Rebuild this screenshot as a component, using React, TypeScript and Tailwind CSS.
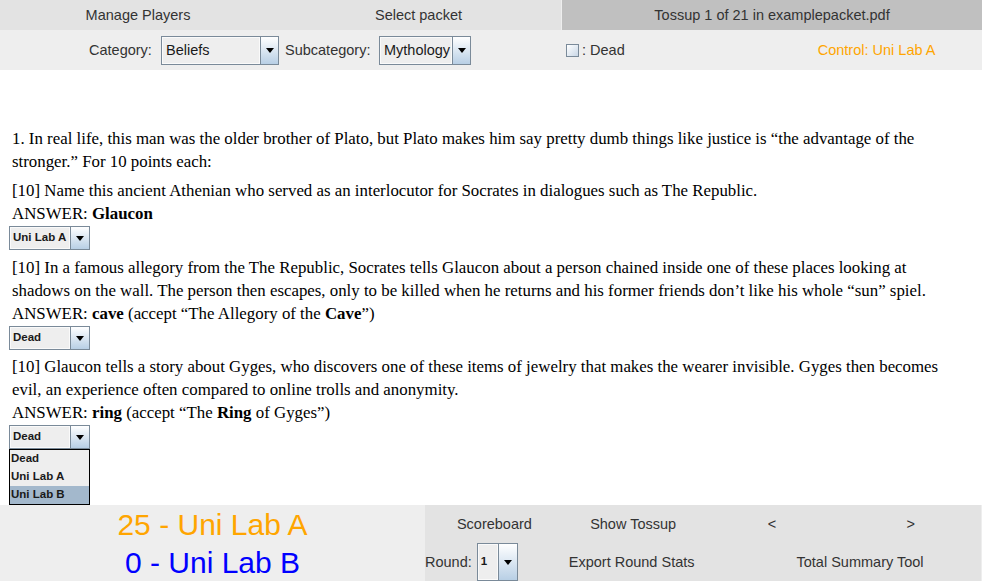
import React from 'react'

function Arrow({ w }: { w: string }) {
  return (
    <div className={`${w} h-full flex items-center justify-center border-l border-[#7a8a99] bg-gradient-to-b from-[#ffffff] to-[#b8cfe5]`}>
      <div className="w-0 h-0 border-l-[4px] border-r-[4px] border-t-[5px] border-l-transparent border-r-transparent border-t-black" />
    </div>
  )
}

function Combo({
  value,
  width,
  height,
  small,
}: {
  value: string
  width: string
  height: string
  small?: boolean
}) {
  return (
    <div className={`${width} ${height} flex border border-[#7a8a99] bg-[#eeeeee] shrink-0`}>
      <div
        className={`flex-1 flex items-center border border-white/70 ${
          small ? 'pl-[2px] text-[11.5px] font-bold text-[#1a1a1a]' : 'pl-[3px] pt-[1px] text-[14.5px] text-[#1a1a1a]'
        }`}
      >
        {value}
      </div>
      <Arrow w={small ? 'w-[19px]' : 'w-[18px]'} />
    </div>
  )
}

const para = 'text-[16.85px] leading-[23px] text-black'

export default function App() {
  return (
    <div className="w-[982px] h-[581px] overflow-hidden flex flex-col bg-white text-[#333333] font-['Liberation_Sans',Arial,sans-serif]">
      {/* tabs */}
      <div className="h-[30px] flex bg-[#e3e3e3] text-[14.5px]">
        <div className="w-[276px] flex items-center justify-center pt-[1px]">Manage Players</div>
        <div className="w-[285px] flex items-center justify-center pt-[1px]">Select packet</div>
        <div className="w-[1px] bg-[#eeeeee]" />
        <div className="flex-1 flex items-center justify-center pt-[1px] bg-[#c0c0c0]">Tossup 1 of 21 in examplepacket.pdf</div>
      </div>

      {/* filter row */}
      <div className="h-[40px] flex items-center bg-[#eeeeee] text-[14.5px]">
        <span className="ml-[89px] w-[72px] pt-[1px]">Category:</span>
        <Combo value="Beliefs" width="w-[118px]" height="h-[29px]" />
        <span className="ml-[6px] w-[94px] pt-[1px]">Subcategory:</span>
        <Combo value="Mythology" width="w-[92px]" height="h-[29px]" />
        <div className="ml-[95px] w-[13px] h-[13px] border border-[#7a8a99] bg-gradient-to-br from-[#ffffff] to-[#c9d7e6]" />
        <span className="ml-[3px] pt-[1px]">: Dead</span>
        <span className="ml-[193px] pt-[1px] text-[#ffa500]">Control: Uni Lab A</span>
      </div>

      {/* question */}
      <div className="relative flex-1 pt-[57px] pl-[12px] font-['Liberation_Serif','Times_New_Roman',serif]">
        <div className="w-[945px]">
          <p className={para}>
            1. In real life, this man was the older brother of Plato, but Plato makes him say pretty dumb things like justice is “the advantage of the stronger.” For 10 points each:
          </p>
          <p className={`${para} mt-[6px]`}>
            [10] Name this ancient Athenian who served as an interlocutor for Socrates in dialogues such as The Republic.
          </p>
          <p className={para}>
            ANSWER: <b>Glaucon</b>
          </p>
        </div>
        <div className="-ml-[3px] mt-[1px] font-['Liberation_Sans',Arial,sans-serif]">
          <Combo value="Uni Lab A" width="w-[81px]" height="h-[24px]" small />
        </div>
        <div className="w-[945px]">
          <p className={`${para} mt-[6px]`}>
            [10] In a famous allegory from the The Republic, Socrates tells Glaucon about a person chained inside one of these places looking at shadows on the wall. The person then escapes, only to be killed when he returns and his former friends don’t like his whole “sun” spiel.
          </p>
          <p className={para}>
            ANSWER: <b>cave</b> (accept “The Allegory of the <b>Cave</b>”)
          </p>
        </div>
        <div className="-ml-[3px] mt-[1px] font-['Liberation_Sans',Arial,sans-serif]">
          <Combo value="Dead" width="w-[81px]" height="h-[24px]" small />
        </div>
        <div className="w-[945px]">
          <p className={`${para} mt-[5px]`}>
            [10] Glaucon tells a story about Gyges, who discovers one of these items of jewelry that makes the wearer invisible. Gyges then becomes evil, an experience often compared to online trolls and anonymity.
          </p>
          <p className={para}>
            ANSWER: <b>ring</b> (accept “The <b>Ring</b> of Gyges”)
          </p>
        </div>
        <div className="relative -ml-[3px] mt-[1px] font-['Liberation_Sans',Arial,sans-serif]">
          <Combo value="Dead" width="w-[81px]" height="h-[24px]" small />
          <div className="absolute left-0 top-[24px] z-10 w-[81px] border border-black bg-[#eeeeee] text-[11.5px] font-bold text-[#1a1a1a]">
            <div className="h-[18px] pl-[1px] flex items-center">Dead</div>
            <div className="h-[18px] pl-[1px] flex items-center">Uni Lab A</div>
            <div className="h-[18px] pl-[1px] flex items-center bg-[#a3b8cc]">Uni Lab B</div>
          </div>
        </div>
      </div>

      {/* bottom */}
      <div className="h-[76px] flex">
        <div className="w-[425px] bg-[#eeeeee] flex flex-col items-center text-[30px] leading-[38px] pt-[1px]">
          <div className="text-[#ffa500]">25 - Uni Lab A</div>
          <div className="text-[#0000ff]">0 - Uni Lab B</div>
        </div>
        <div className="flex-1 bg-[#e3e3e3] text-[14.5px] flex flex-col">
          <div className="h-[38px] grid grid-cols-4 items-center text-center pr-[1px] pt-[1px]">
            <span>Scoreboard</span>
            <span>Show Tossup</span>
            <span>&lt;</span>
            <span>&gt;</span>
          </div>
          <div className="h-[38px] flex items-end">
            <div className="h-full flex items-center pt-[2px]">
              <span>Round:</span>
            </div>
            <div className="ml-[5px] h-[38px]">
              <Combo value="1" width="w-[41px]" height="h-[38px]" small />
            </div>
            <div className="h-full flex items-center pt-[2px] ml-[51px]">Export Round Stats</div>
            <div className="h-full flex items-center pt-[2px] ml-[102px]">Total Summary Tool</div>
          </div>
        </div>
        <div className="w-[1px] bg-[#eeeeee]" />
      </div>
    </div>
  )
}
